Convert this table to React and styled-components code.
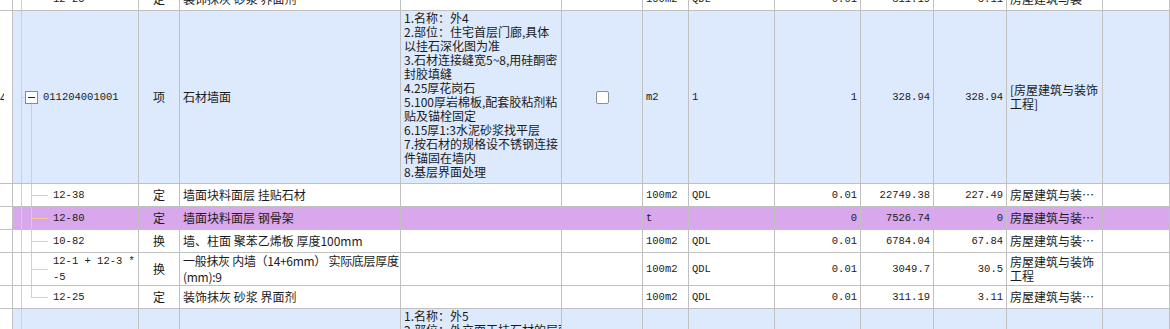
import React from 'react';
import styled, { createGlobalStyle } from 'styled-components';

const GlobalStyle = createGlobalStyle`
  html, body {
    margin: 0;
    padding: 0;
    background: #ffffff;
    overflow: hidden;
  }
`;

const COLS = '13px 126px 41px 221px 161px 81px 46px 86px 86px 73px 73px 96px 1fr';

const tones = {
  white: '#ffffff',
  blue: '#dde9fc',
  purple: '#d8a7ec',
};

const Table = styled.div`
  display: flex;
  flex-direction: column;
  margin-top: -12px;
  width: 1170px;
`;

const Row = styled.div`
  display: grid;
  grid-template-columns: ${COLS};
  box-sizing: border-box;
  height: ${(p) => p.$h + 1}px;
  border-bottom: 1px solid #c0c0c0;
  background: ${(p) => tones[p.$tone || 'white']};
`;

const Cell = styled.div`
  position: relative;
  min-width: 0;
  border-right: 1px solid #c0c0c0;
  padding: 0 3px;
  display: flex;
  align-items: ${(p) => (p.$top ? 'flex-start' : 'center')};
  justify-content: ${(p) =>
    p.$align === 'right' ? 'flex-end' : p.$align === 'center' ? 'center' : 'flex-start'};
  overflow: hidden;
  font-family: ${(p) =>
    p.$mono ? '"Liberation Mono", monospace' : '"Noto Sans CJK SC", sans-serif'};
  font-size: ${(p) => (p.$mono ? '10.5px' : '12px')};
  line-height: 14px;
  color: #1b1b1b;
`;

const NoCell = styled(Cell)`
  background: #ffffff;
  padding: 0 8px 0 0;
`;

const CodeCell = styled(Cell)`
  padding-left: ${(p) => (p.$child ? 40 : 30)}px;
  padding-right: 0;
`;

const NameCell = styled(Cell)`
  padding-right: 0;
  letter-spacing: ${(p) => (p.$multi ? '-0.3px' : '0')};
`;

const Text = styled.span`
  display: block;
  min-width: 0;
  overflow: hidden;
  white-space: nowrap;
  text-overflow: ellipsis;
`;

const Lines = styled.div`
  display: flex;
  flex-direction: column;
  min-width: 0;
  white-space: nowrap;
  line-height: ${(p) => p.$lh || 14}px;
`;

const Line = styled.span`
  display: block;
  white-space: nowrap;
`;

const guide = '#f9c98b';

const Trunk = styled.span`
  position: absolute;
  left: 8px;
  top: 0;
  bottom: 0;
  width: 1px;
  background: ${guide};
`;

const Stem = styled.span`
  position: absolute;
  left: 18px;
  width: 1px;
  top: ${(p) => (p.$fromBox ? 'calc(50% + 7px)' : '0')};
  bottom: ${(p) => (p.$last ? '50%' : '0')};
  background: ${guide};
`;

const Branch = styled.span`
  position: absolute;
  left: 18px;
  top: 50%;
  width: 17px;
  height: 1px;
  background: ${guide};
`;

const Stub = styled.span`
  position: absolute;
  left: 8px;
  top: 50%;
  width: 4px;
  height: 1px;
  background: ${guide};
`;

const Toggle = styled.span`
  position: absolute;
  left: 12px;
  top: calc(50% - 6px);
  width: 13px;
  height: 13px;
  box-sizing: border-box;
  border: 1px solid #8a8a8a;
  background: #ffffff;

  &::after {
    content: '';
    position: absolute;
    left: 2px;
    right: 2px;
    top: 5px;
    height: 1px;
    background: #222;
  }
`;

const Check = styled.span`
  width: 13px;
  height: 13px;
  box-sizing: border-box;
  border: 1px solid #8f8f8f;
  border-radius: 2px;
  background: #ffffff;
`;

const rows = [
  {
    kind: 'child', last: true, h: 22, code: '12-25', type: '定', name: '装饰抹灰 砂浆 界面剂',
    unit: '100m2', expr: 'QDL', qty: '0.01', price: '311.19', total: '3.11', major: '房屋建筑与装饰工程',
  },
  {
    kind: 'parent', h: 172, tone: 'blue', no: '4', code: '011204001001', type: '项', name: '石材墙面',
    desc: [
      '1.名称：外4',
      '2.部位：住宅首层门廊,具体',
      '以挂石深化图为准',
      '3.石材连接缝宽5~8,用硅酮密',
      '封胶填缝',
      '4.25厚花岗石',
      '5.100厚岩棉板,配套胶粘剂粘',
      '贴及锚栓固定',
      '6.15厚1:3水泥砂浆找平层',
      '7.按石材的规格设不锈钢连接',
      '件锚固在墙内',
      '8.基层界面处理',
    ],
    check: true, unit: 'm2', expr: '1', qty: '1', price: '328.94', total: '328.94',
    major: ['[房屋建筑与装饰', '工程]'],
  },
  {
    kind: 'child', h: 22, code: '12-38', type: '定', name: '墙面块料面层 挂贴石材',
    unit: '100m2', expr: 'QDL', qty: '0.01', price: '22749.38', total: '227.49', major: '房屋建筑与装饰工程',
  },
  {
    kind: 'child', h: 22, tone: 'purple', code: '12-80', type: '定', name: '墙面块料面层 钢骨架',
    unit: 't', expr: '', qty: '0', price: '7526.74', total: '0', major: '房屋建筑与装饰工程',
  },
  {
    kind: 'child', h: 22, code: '10-82', type: '换', name: '墙、柱面 聚苯乙烯板 厚度100mm',
    unit: '100m2', expr: 'QDL', qty: '0.01', price: '6784.04', total: '67.84', major: '房屋建筑与装饰工程',
  },
  {
    kind: 'child', h: 32, code: ['12-1 + 12-3 *', '-5'], type: '换',
    name: ['一般抹灰 内墙（14+6mm） 实际底层厚度', '(mm):9'],
    unit: '100m2', expr: 'QDL', qty: '0.01', price: '3049.7', total: '30.5', major: ['房屋建筑与装饰', '工程'],
  },
  {
    kind: 'child', last: true, h: 22, code: '12-25', type: '定', name: '装饰抹灰 砂浆 界面剂',
    unit: '100m2', expr: 'QDL', qty: '0.01', price: '311.19', total: '3.11', major: '房屋建筑与装饰工程',
  },
  {
    kind: 'parent', h: 172, tone: 'blue', no: '5', code: '011204001002', type: '项', name: '石材墙面',
    desc: ['1.名称：外5', '2.部位：外立面干挂石材的层面'],
    check: true, unit: 'm2', expr: '1', qty: '1', price: '', total: '', major: '',
  },
];

const Content = ({ value, lh }) =>
  Array.isArray(value) ? (
    <Lines $lh={lh}>
      {value.map((line, i) => (
        <Line key={i}>{line}</Line>
      ))}
    </Lines>
  ) : (
    <Text>{value}</Text>
  );

const TreeGuides = ({ row }) =>
  row.kind === 'parent' ? (
    <>
      <Trunk />
      <Stub />
      <Toggle />
      <Stem $fromBox />
    </>
  ) : (
    <>
      <Trunk />
      <Stem $last={row.last} />
      <Branch />
    </>
  );

const GridRow = ({ row }) => (
  <Row $h={row.h} $tone={row.tone}>
    <NoCell $align="right">{row.no && <Text>{row.no}</Text>}</NoCell>
    <CodeCell $mono $child={row.kind === 'child'}>
      <TreeGuides row={row} />
      <Content value={row.code} lh={16} />
    </CodeCell>
    <Cell $align="center">{row.type}</Cell>
    <NameCell $multi={Array.isArray(row.name)}>
      <Content value={row.name} lh={16} />
    </NameCell>
    <Cell $top={!!row.desc}>{row.desc && <Content value={row.desc} />}</Cell>
    <Cell $align="center">{row.check && <Check />}</Cell>
    <Cell $mono>{row.unit}</Cell>
    <Cell $mono>{row.expr}</Cell>
    <Cell $mono $align="right">{row.qty}</Cell>
    <Cell $mono $align="right">{row.price}</Cell>
    <Cell $mono $align="right">{row.total}</Cell>
    <Cell>
      <Content value={row.major} />
    </Cell>
    <Cell />
  </Row>
);

const App = () => (
  <>
    <GlobalStyle />
    <Table>
      {rows.map((row, i) => (
        <GridRow key={i} row={row} />
      ))}
    </Table>
  </>
);

export default App;
